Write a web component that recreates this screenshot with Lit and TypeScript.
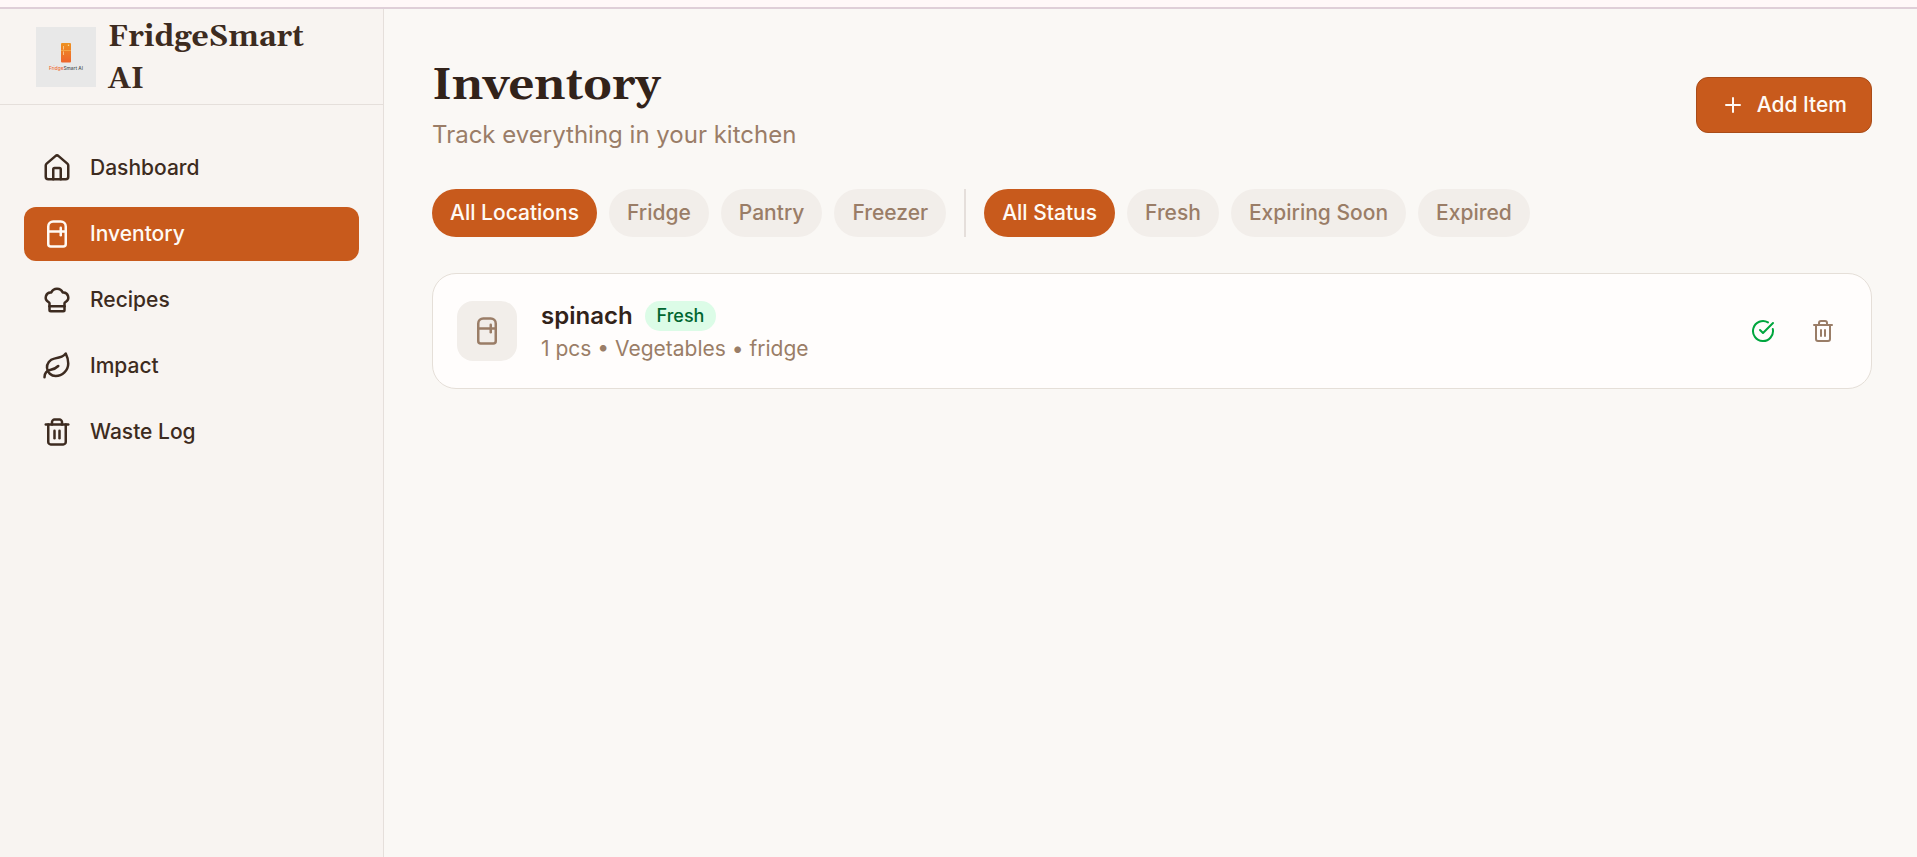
import { LitElement, html, css, svg } from "lit";
import { customElement, property, state } from "lit/decorators.js";
import { classMap } from "lit/directives/class-map.js";

const ICONS: Record<string, string[]> = {
  home: [
    "M15 21v-8a1 1 0 0 0-1-1h-4a1 1 0 0 0-1 1v8",
    "M3 10a2 2 0 0 1 .709-1.528l7-5.999a2 2 0 0 1 2.582 0l7 5.999A2 2 0 0 1 21 10v9a2 2 0 0 1-2 2H5a2 2 0 0 1-2-2z",
  ],
  fridge: [
    "M5 6a4 4 0 0 1 4-4h6a4 4 0 0 1 4 4v14a2 2 0 0 1-2 2H7a2 2 0 0 1-2-2Z",
    "M5 10h14",
    "M15 7v6",
  ],
  chef: [
    "M17 21a1 1 0 0 0 1-1v-5.35c0-.457.316-.844.727-1.041a4 4 0 0 0-2.134-7.589 5 5 0 0 0-9.186 0 4 4 0 0 0-2.134 7.588c.411.198.727.585.727 1.041V20a1 1 0 0 0 1 1Z",
    "M6 17h12",
  ],
  leaf: [
    "M11 20A7 7 0 0 1 9.8 6.1C15.5 5 17 4.48 19 2c1 2 2 4.18 2 8 0 5.5-4.78 10-10 10Z",
    "M2 21c0-3 1.85-5.36 5.08-6C9.5 14.52 12 13 13 12",
  ],
  trash: [
    "M3 6h18",
    "M19 6v14c0 1-1 2-2 2H7c-1 0-2-1-2-2V6",
    "M8 6V4c0-1 1-2 2-2h4c1 0 2 1 2 2v2",
    "M10 11v6",
    "M14 11v6",
  ],
  check: ["M21.801 10A10 10 0 1 1 17 3.335", "m9 11 3 3L22 4"],
  plus: ["M5 12h14", "M12 5v14"],
};

@customElement("line-icon")
class LineIcon extends LitElement {
  @property() name = "home";

  static styles = css`
    :host {
      display: block;
      flex: none;
      width: 24px;
      height: 24px;
    }
    svg {
      display: block;
      width: 100%;
      height: 100%;
      fill: none;
      stroke: currentColor;
      stroke-width: 2;
      stroke-linecap: round;
      stroke-linejoin: round;
    }
  `;

  render() {
    return html`<svg viewBox="0 0 24 24" aria-hidden="true">
      ${(ICONS[this.name] ?? []).map((d) => svg`<path d=${d}></path>`)}
    </svg>`;
  }
}

const NAV = [
  { label: "Dashboard", icon: "home" },
  { label: "Inventory", icon: "fridge" },
  { label: "Recipes", icon: "chef" },
  { label: "Impact", icon: "leaf" },
  { label: "Waste Log", icon: "trash" },
];
const LOCATIONS = ["All Locations", "Fridge", "Pantry", "Freezer"];
const STATUSES = ["All Status", "Fresh", "Expiring Soon", "Expired"];
const ITEMS = [
  { name: "spinach", status: "Fresh", detail: "1 pcs • Vegetables • fridge" },
];

@customElement("app-root")
class AppRoot extends LitElement {
  @state() private page = "Inventory";
  @state() private location = "All Locations";
  @state() private status = "All Status";

  static styles = css`
    * {
      box-sizing: border-box;
    }
    :host {
      display: flex;
      flex-direction: column;
      min-height: 100vh;
      font-family: Inter, sans-serif;
      font-size: 21px;
      line-height: 30px;
      color: #32231a;
      background: #faf8f5;
    }
    h1,
    h2,
    p {
      margin: 0;
    }
    button {
      font: inherit;
      border: 0;
      cursor: pointer;
    }
    .strip {
      height: 9px;
      background: #fff8f8;
      border-bottom: 2px solid #dfcfd8;
    }
    .shell {
      display: flex;
      flex: 1;
    }
    .sidebar {
      flex: none;
      width: 384px;
      background: #f8f4f1;
      border-right: 1px solid #e5dfdb;
    }
    .brand {
      display: flex;
      align-items: center;
      gap: 12px;
      height: 96px;
      padding: 0 36px;
      border-bottom: 1px solid #e5dfdb;
      color: #3d2b20;
      font: bold 30px/42px Georgia, Gelasio, "Liberation Serif", serif;
    }
    .brand-name {
      padding-top: 2px;
    }
    .logo {
      flex: none;
      width: 60px;
      height: 60px;
    }
    .logo-text {
      font: 500 19px Inter, sans-serif;
    }
    nav {
      display: flex;
      flex-direction: column;
      gap: 12px;
      padding: 36px 24px;
    }
    .link {
      display: flex;
      align-items: center;
      gap: 18px;
      height: 54px;
      padding: 0 18px;
      border-radius: 12px;
      color: #3d2b20;
      font-weight: 500;
      text-decoration: none;
    }
    .link line-icon,
    .tile line-icon {
      width: 30px;
      height: 30px;
    }
    .link.active,
    .pill.active {
      background: #c85a1c;
      color: #fffaf5;
    }
    main {
      flex: 1;
      display: flex;
      flex-direction: column;
      gap: 36px;
      padding: 48px 45px 48px 48px;
    }
    .head {
      display: flex;
      align-items: center;
      justify-content: space-between;
    }
    h1 {
      margin-bottom: 3px;
      font: bold 45px/57px Georgia, Gelasio, "Liberation Serif", serif;
    }
    .subtitle {
      font-size: 24px;
      line-height: 36px;
      color: #9a7d67;
    }
    .add {
      display: flex;
      align-items: center;
      gap: 12px;
      height: 56px;
      padding: 0 24px;
      border: 1px solid #a94c18;
      border-radius: 12px;
      background: #c85a1c;
      color: #fffaf5;
      font-weight: 500;
    }
    .filters {
      display: flex;
      flex-wrap: wrap;
      gap: 12px;
    }
    .divider {
      width: 2px;
      margin: 0 6px;
      background: #e5dfdb;
    }
    .pill {
      height: 48px;
      padding: 0 18px;
      border-radius: 24px;
      background: #f2eeea;
      color: #9a7d67;
      font-weight: 500;
    }
    .card {
      display: flex;
      align-items: center;
      gap: 24px;
      padding: 24px;
      border: 1px solid #e5dfd8;
      border-radius: 24px;
      background: #fffdfc;
    }
    .tile {
      display: grid;
      place-items: center;
      width: 60px;
      height: 60px;
      border-radius: 16px;
      background: #f2eeea;
      color: #9a7d67;
    }
    .info {
      flex: 1;
    }
    .title {
      display: flex;
      align-items: center;
      gap: 12px;
    }
    h2 {
      font-size: 24px;
      line-height: 36px;
      font-weight: 600;
    }
    .badge {
      padding: 0 12px;
      border-radius: 15px;
      background: #dcfce7;
      color: #016630;
      font-size: 18px;
      font-weight: 500;
    }
    .detail {
      color: #9a7d67;
    }
    .actions {
      display: flex;
      gap: 12px;
    }
    .action {
      display: grid;
      place-items: center;
      width: 48px;
      height: 48px;
      padding: 0;
      border-radius: 12px;
      background: none;
      color: #9a7d67;
    }
    .action.done {
      color: #00a63e;
    }
  `;

  private pills(labels: string[], current: string, pick: (v: string) => void) {
    return labels.map(
      (label) => html`<button
        class=${classMap({ pill: true, active: label === current })}
        aria-pressed=${label === current}
        @click=${() => pick(label)}
      >${label}</button>`
    );
  }

  render() {
    return html`
      <div class="strip"></div>
      <div class="shell">
        <aside class="sidebar">
          <div class="brand">
            <svg class="logo" viewBox="0 0 240 240" aria-hidden="true">
              <defs>
                <linearGradient id="door" x1="0" y1="0" x2="0" y2="1">
                  <stop offset="0" stop-color="#ee9222"></stop>
                  <stop offset="1" stop-color="#ee642c"></stop>
                </linearGradient>
              </defs>
              <rect width="240" height="240" fill="#e8e8e8"></rect>
              <rect x="100" y="64" width="40" height="78" rx="4" fill="url(#door)"></rect>
              <path d="M100 94h40" stroke="#f7b04f" stroke-width="3"></path>
              <path d="M110 76v14M110 98v14" stroke="#fbd6a0" stroke-width="3"></path>
              <circle cx="130" cy="73" r="3" fill="#fbe0a0"></circle>
              <text class="logo-text" x="120" y="170" text-anchor="middle" fill="#4c5358"><tspan fill="#f0692f">Fridge</tspan>Smart AI</text>
            </svg>
            <span class="brand-name">FridgeSmart AI</span>
          </div>
          <nav>
            ${NAV.map(
              ({ label, icon }) => html`<a
                class=${classMap({ link: true, active: label === this.page })}
                href="#"
                @click=${(e: Event) => {
                  e.preventDefault();
                  this.page = label;
                }}
                ><line-icon name=${icon}></line-icon>${label}</a
              >`
            )}
          </nav>
        </aside>
        <main>
          <header class="head">
            <div>
              <h1>Inventory</h1>
              <p class="subtitle">Track everything in your kitchen</p>
            </div>
            <button class="add"><line-icon name="plus"></line-icon>Add Item</button>
          </header>
          <div class="filters">
            ${this.pills(LOCATIONS, this.location, (v) => (this.location = v))}
            <div class="divider"></div>
            ${this.pills(STATUSES, this.status, (v) => (this.status = v))}
          </div>
          ${ITEMS.map(
            (item) => html`<article class="card">
              <div class="tile"><line-icon name="fridge"></line-icon></div>
              <div class="info">
                <div class="title">
                  <h2>${item.name}</h2>
                  <span class="badge">${item.status}</span>
                </div>
                <p class="detail">${item.detail}</p>
              </div>
              <div class="actions">
                <button class="action done" aria-label="Mark as used"><line-icon name="check"></line-icon></button>
                <button class="action" aria-label="Delete"><line-icon name="trash"></line-icon></button>
              </div>
            </article>`
          )}
        </main>
      </div>
    `;
  }
}
